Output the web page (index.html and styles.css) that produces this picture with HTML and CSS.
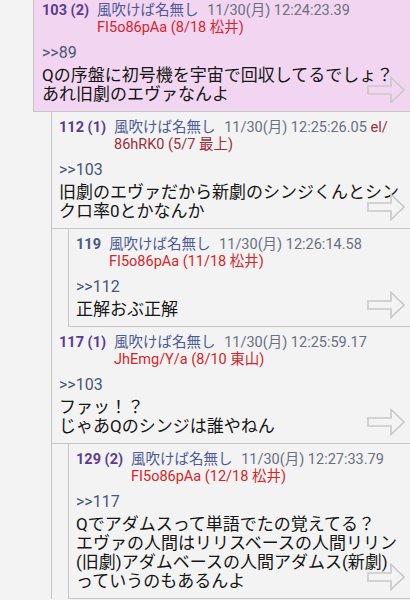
FILE: index.html
```html
<!DOCTYPE html>
<html lang="ja">
<head>
<meta charset="utf-8">
<title>thread</title>
<link rel="stylesheet" href="styles.css">
</head>
<body>
<div class="thread">
  <article class="post post-root">
    <div class="head">
      <span class="num">103 (2)</span>
      <div class="meta"><span class="name">風吹けば名無し</span> <span class="date">11/30(月) 12:24:23.39</span> <span class="id">FI5o86pAa (8/18 松井)</span></div>
    </div>
    <div class="anchor">&gt;&gt;89</div>
    <p class="body">Qの序盤に初号機を宇宙で回収してるでしょ？<br>あれ旧劇のエヴァなんよ</p>
    <svg class="arrow" viewBox="0 0 38 28"><path d="M1 10 H24 V1.5 L37 14 L24 26.5 V18 H1 Z"/></svg>
  </article>
  <div class="replies">
    <article class="post">
      <div class="head">
        <span class="num">112 (1)</span>
        <div class="meta"><span class="name">風吹けば名無し</span> <span class="date">11/30(月) 12:25:26.05</span> <span class="id id-dark">el/<wbr>86hRK0 (5/7 最上)</span></div>
      </div>
      <div class="anchor">&gt;&gt;103</div>
      <p class="body">旧劇のエヴァだから新劇のシンジくんとシン<br>クロ率0とかなんか</p>
      <svg class="arrow" viewBox="0 0 38 28"><path d="M1 10 H24 V1.5 L37 14 L24 26.5 V18 H1 Z"/></svg>
    </article>
    <div class="replies">
      <article class="post">
        <div class="head">
          <span class="num num-plain">119</span>
          <div class="meta"><span class="name">風吹けば名無し</span> <span class="date">11/30(月) 12:26:14.58</span> <span class="id">FI5o86pAa (11/18 松井)</span></div>
        </div>
        <div class="anchor">&gt;&gt;112</div>
        <p class="body">正解おぶ正解</p>
        <svg class="arrow" viewBox="0 0 38 28"><path d="M1 10 H24 V1.5 L37 14 L24 26.5 V18 H1 Z"/></svg>
      </article>
    </div>
    <article class="post">
      <div class="head">
        <span class="num">117 (1)</span>
        <div class="meta"><span class="name">風吹けば名無し</span> <span class="date">11/30(月) 12:25:59.17</span> <span class="id">JhEmg/Y/a (8/10 東山)</span></div>
      </div>
      <div class="anchor">&gt;&gt;103</div>
      <p class="body">ファッ！？<br>じゃあQのシンジは誰やねん</p>
      <svg class="arrow" viewBox="0 0 38 28"><path d="M1 10 H24 V1.5 L37 14 L24 26.5 V18 H1 Z"/></svg>
    </article>
    <div class="replies">
      <article class="post">
        <div class="head">
          <span class="num">129 (2)</span>
          <div class="meta"><span class="name">風吹けば名無し</span> <span class="date">11/30(月) 12:27:33.79</span> <span class="id">FI5o86pAa (12/18 松井)</span></div>
        </div>
        <div class="anchor">&gt;&gt;117</div>
        <p class="body">Qでアダムスって単語でたの覚えてる？<br>エヴァの人間はリリスベースの人間リリン<br>(旧劇)アダムベースの人間アダムス(新劇)<br>っていうのもあるんよ</p>
        <svg class="arrow" viewBox="0 0 38 28"><path d="M1 10 H24 V1.5 L37 14 L24 26.5 V18 H1 Z"/></svg>
      </article>
    </div>
  </div>
</div>
</body>
</html>
```

FILE: styles.css
```css
* {
  box-sizing: border-box;
}

html,
body {
  margin: 0;
  padding: 0;
}

body {
  width: 410px;
  height: 600px;
  overflow: hidden;
  background: #f3f3f3;
  font-family: Roboto, "Noto Sans CJK JP", sans-serif;
  color: #151515;
}

.thread {
  padding-left: 33px;
  margin-top: -5px;
}

.post {
  position: relative;
  padding: 7px 8px 7px 8px;
  border-bottom: 1px solid #c6c6c6;
}

.post-root {
  border-left: 1px solid #c6c6c6;
  background: #f2d5f0;
}

.replies {
  margin-left: 18px;
  border-left: 1px solid #c6c6c6;
}

.replies .replies {
  margin-left: 16px;
}

.replies .post {
  padding-left: 7px;
}

.head {
  display: flex;
  gap: 8px;
  font-size: 14.5px;
  line-height: 17px;
}

.num {
  flex: none;
  white-space: nowrap;
  font-weight: 700;
  color: #5a3d92;
}

.num-plain {
  color: #4a5880;
}

.meta {
  flex: 1;
  min-width: 0;
}

.name {
  color: #4d5a93;
  margin-right: 5px;
}

.date {
  color: #6a7082;
}

.id {
  color: #d4262b;
}

.id-dark {
  color: #9c2f3c;
}

.anchor {
  margin-top: 6px;
  font-size: 16px;
  line-height: 22px;
  color: #4a5577;
}

.body {
  margin: 2px 0 0;
  font-size: 17px;
  line-height: 19px;
  color: #151515;
}

.arrow {
  position: absolute;
  right: 5px;
  bottom: 7px;
  width: 38px;
  height: 28px;
  fill: none;
  stroke: #c9c9c9;
  stroke-width: 1.6;
  stroke-linejoin: miter;
}
```
